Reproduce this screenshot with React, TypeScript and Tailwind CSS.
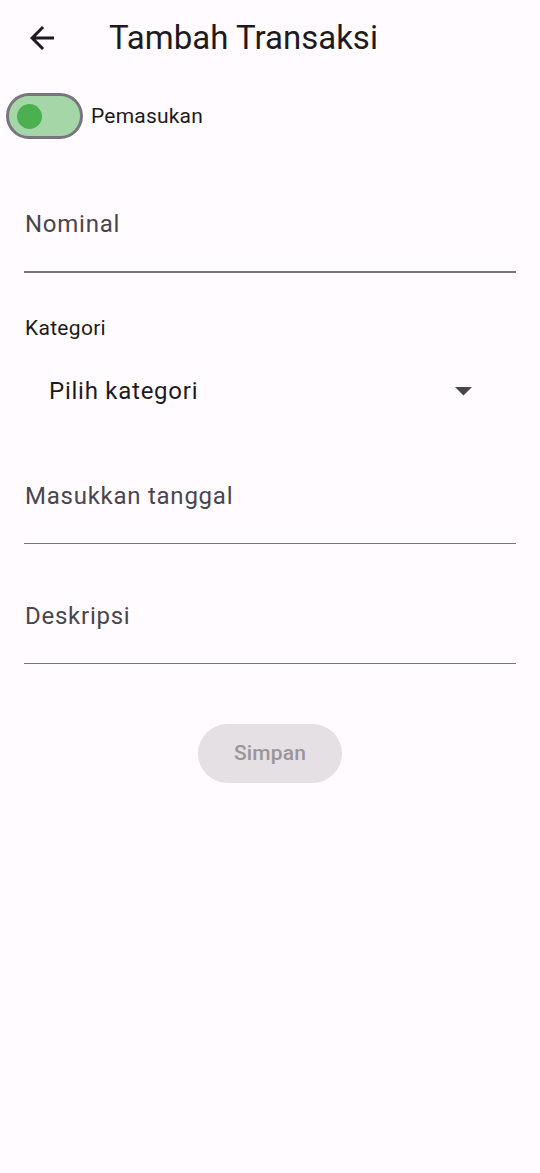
import React, { useState } from 'react';

const font = { fontFamily: 'Roboto, "Noto Sans", sans-serif' };

function UnderlineField({ label, top }: { label: string; top: string }) {
  return (
    <div className={`${top} px-[24px]`}>
      <div className="h-[36px] leading-[36px] text-[24px] tracking-[0.75px] text-[#49454f] pl-[1px]">
        {label}
      </div>
      <div className="mt-[29px] h-[1.5px] bg-[#79747e]" />
    </div>
  );
}

export default function App() {
  const [income, setIncome] = useState(false);

  return (
    <div className="min-h-[1173px] w-full bg-[#fffbfe] text-[#1d1b20]" style={font}>
      {/* app bar */}
      <div className="flex h-[76px] items-center">
        <button className="ml-[24px] flex h-[36px] w-[36px] items-center justify-center">
          <svg width="36" height="36" viewBox="0 0 24 24" fill="#1d1b20">
            <path d="M20 11H7.83l5.59-5.59L12 4l-8 8 8 8 1.41-1.41L7.83 13H20v-2z" />
          </svg>
        </button>
        <h1 className="ml-[49px] text-[33px] leading-[44px] font-normal text-[#1d1b20]">Tambah Transaksi</h1>
      </div>

      {/* switch */}
      <div className="mt-[17px] flex h-[46px] items-center">
        <button
          onClick={() => setIncome(!income)}
          className="ml-[6px] flex h-[46px] w-[77px] items-center rounded-full border-[3px] border-[#79747e] bg-[#a5d6a7] pl-[8px]"
        >
          <span className="block h-[25px] w-[25px] rounded-full bg-[#4caf50]" />
        </button>
        <span className="ml-[8px] text-[21px] leading-[30px] tracking-[0.2px] text-[#1d1b20]">Pemasukan</span>
      </div>

      <UnderlineField label="Nominal" top="mt-[67px]" />

      {/* kategori */}
      <div className="mt-[39px] px-[24px]">
        <div className="h-[32px] leading-[32px] text-[21px] tracking-[0.3px] text-[#1d1b20] pl-[1px]">Kategori</div>
      </div>
      <div className="mt-[29px] ml-[49px] flex h-[36px] w-[423px] items-center justify-between">
        <span className="text-[24px] leading-[36px] tracking-[0.75px] text-[#1d1b20]">Pilih kategori</span>
        <svg width="17" height="9" viewBox="0 0 17 9" className="mt-[1px]">
          <path d="M0 0h17L8.5 8.5z" fill="#49454f" />
        </svg>
      </div>

      <UnderlineField label="Masukkan tanggal" top="mt-[69px]" />
      <UnderlineField label="Deskripsi" top="mt-[53.5px]" />

      <div className="mt-[60px] flex justify-center">
        <button
          disabled
          className="flex h-[59px] w-[144px] items-center justify-center rounded-full bg-[#e5e0e4] text-[21px] font-medium tracking-[0.15px] text-[#99969a]"
        >
          Simpan
        </button>
      </div>
    </div>
  );
}
